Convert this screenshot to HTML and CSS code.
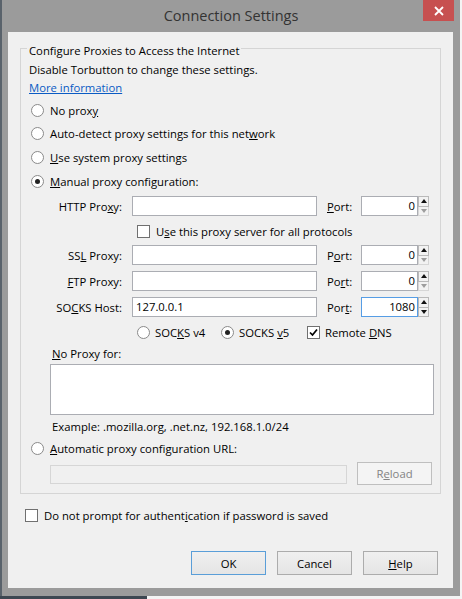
FILE: index.html
```html
<!DOCTYPE html>
<html>
<head>
<meta charset="utf-8">
<title>Connection Settings</title>
<link rel="stylesheet" href="styles.css">
</head>
<body>
<div class="desktop">
  <div class="window">
    <div class="titlebar">
      <div class="title">Connection Settings</div>
      <div class="close">
        <svg width="10" height="10" viewBox="0 0 10 10"><path d="M1 1L9 9M9 1L1 9" stroke="#fff" stroke-width="1.8" fill="none"/></svg>
      </div>
    </div>
    <div class="client">
      <fieldset class="group">
        <legend>Configure Proxies to Access the Internet</legend>
        <div class="line">Disable Torbutton to change these settings.</div>
        <div class="line"><a class="link" href="#">More information</a></div>
        <div class="opt mt2"><span class="radio"></span><span>No prox<u>y</u></span></div>
        <div class="opt mt1"><span class="radio"></span><span>Auto-detect proxy settings for this net<u>w</u>ork</span></div>
        <div class="opt mt2"><span class="radio"></span><span><u>U</u>se system proxy settings</span></div>
        <div class="opt mt2"><span class="radio on"></span><span><u>M</u>anual proxy configuration:</span></div>

        <div class="field mt3">
          <span class="flabel">HTTP Pro<u>x</u>y:</span>
          <span class="tb"></span>
          <span class="plabel"><u>P</u>ort:</span>
          <span class="port">0</span>
          <span class="spin"><span class="up"><i class="tri-up"></i></span><span class="down off"><i class="tri-down"></i></span></span>
        </div>
        <div class="opt sub mt3"><span class="check"></span><span>U<u>s</u>e this proxy server for all protocols</span></div>
        <div class="field mt2">
          <span class="flabel">SS<u>L</u> Proxy:</span>
          <span class="tb"></span>
          <span class="plabel">P<u>o</u>rt:</span>
          <span class="port">0</span>
          <span class="spin"><span class="up"><i class="tri-up"></i></span><span class="down off"><i class="tri-down"></i></span></span>
        </div>
        <div class="field mt4">
          <span class="flabel"><u>F</u>TP Proxy:</span>
          <span class="tb"></span>
          <span class="plabel">Po<u>r</u>t:</span>
          <span class="port">0</span>
          <span class="spin"><span class="up"><i class="tri-up"></i></span><span class="down off"><i class="tri-down"></i></span></span>
        </div>
        <div class="field mt4">
          <span class="flabel">SO<u>C</u>KS Host:</span>
          <span class="tb">127.0.0.1</span>
          <span class="plabel">Por<u>t</u>:</span>
          <span class="port focus">1080</span>
          <span class="spin"><span class="up"><i class="tri-up"></i></span><span class="down"><i class="tri-down"></i></span></span>
        </div>
        <div class="socks mt3">
          <span class="item w84"><span class="radio"></span><span>SOC<u>K</u>S v4</span></span>
          <span class="item w86"><span class="radio on"></span><span>SOCKS <u>v</u>5</span></span>
          <span class="item"><span class="check on"><svg width="11" height="11" viewBox="0 0 11 11"><path d="M2 5.5L4.5 8L9 2.5" stroke="#000" stroke-width="1.7" fill="none"/></svg></span><span>Remote <u>D</u>NS</span></span>
        </div>
        <div class="line indent mt2"><u>N</u>o Proxy for:</div>
        <div class="area"></div>
        <div class="line indent mt3">Example: .mozilla.org, .net.nz, 192.168.1.0/24</div>
        <div class="opt mt1"><span class="radio"></span><span><u>A</u>utomatic proxy configuration URL:</span></div>
        <div class="urlrow">
          <span class="url"></span>
          <span class="btn disabled">R<u>e</u>load</span>
        </div>
      </fieldset>
      <div class="opt prompt"><span class="check"></span><span>Do not prompt for authent<u>i</u>cation if password is saved</span></div>
      <div class="buttons">
        <span class="btn default">OK</span>
        <span class="btn">Cancel</span>
        <span class="btn"><u>H</u>elp</span>
      </div>
    </div>
  </div>
  <div class="strip"></div>
</div>
</body>
</html>
```
FILE: styles.css
```css
body {
  margin: 0;
  background: #f4f4f4;
  font-family: "Open Sans", "Noto Sans", sans-serif;
  font-size: 11.3px;
  color: #000;
}
.desktop {
  width: 462px;
  height: 599px;
  overflow: hidden;
}
.window {
  width: 460px;
  height: 596px;
  box-sizing: border-box;
  background: #9b9b9b;
  border-left: 2px solid #59626b;
  padding: 0 7px 8px 6px;
  display: flex;
  flex-direction: column;
}
.titlebar {
  height: 32px;
  flex: none;
  display: grid;
  grid-template-columns: 1fr auto 1fr;
  align-items: start;
  margin-right: -1px;
}
.title {
  grid-column: 2;
  font-size: 14.5px;
  line-height: 32px;
  color: #333;
}
.close {
  grid-column: 3;
  justify-self: end;
  width: 31px;
  height: 21px;
  background: #c75050;
  display: flex;
  align-items: center;
  justify-content: center;
}
.close svg { display: block; }
.client {
  flex: 1;
  background: #f0f0f0;
  display: flex;
  flex-direction: column;
  padding: 0 12px;
}
.group {
  margin: 6px 0 0;
  padding: 3px 0 8px;
  border: 1px solid #d5d5d5;
  min-width: 0;
}
.group legend {
  margin-left: 6px;
  padding: 6px 2px 0;
  line-height: 14px;
}
.line {
  height: 18px;
  line-height: 18px;
  padding-left: 8px;
  white-space: nowrap;
}
.line.indent { padding-left: 31px; }
.link { color: #0a5bc4; text-decoration: underline; }
.opt {
  display: flex;
  align-items: center;
  gap: 6px;
  height: 22px;
  padding-left: 10px;
  white-space: nowrap;
}
.opt.sub { padding-left: 116px; }
.mt1 { margin-top: 1px; }
.mt2 { margin-top: 2px; }
.mt3 { margin-top: 3px; }
.mt4 { margin-top: 4px; }
.radio {
  width: 13px;
  height: 13px;
  box-sizing: border-box;
  border: 1px solid #8a8a8a;
  border-radius: 50%;
  background: #fff;
  flex: none;
  display: flex;
  align-items: center;
  justify-content: center;
}
.radio.on::after {
  content: "";
  width: 5px;
  height: 5px;
  border-radius: 50%;
  background: #222;
}
.check {
  width: 13px;
  height: 13px;
  box-sizing: border-box;
  border: 1px solid #707070;
  background: #fff;
  flex: none;
  display: flex;
  align-items: center;
  justify-content: center;
}
.check svg { display: block; }
.field {
  display: flex;
  align-items: center;
  height: 22px;
  white-space: nowrap;
}
.flabel {
  width: 101px;
  text-align: right;
}
.tb, .port, .url, .area {
  box-sizing: border-box;
  background: #fff;
  border: 1px solid #abadb3;
}
.tb {
  width: 185px;
  height: 20px;
  margin-left: 10px;
  padding-left: 3px;
  line-height: 18px;
}
.plabel {
  width: 34px;
  margin-left: 10px;
}
.port {
  width: 57px;
  height: 20px;
  text-align: right;
  padding-right: 2px;
  line-height: 18px;
}
.port.focus { border-color: #569de5; }
.spin {
  width: 11px;
  height: 20px;
  display: flex;
  flex-direction: column;
}
.spin > span {
  flex: 1;
  box-sizing: border-box;
  border: 1px solid #b9b9b9;
  background: #f2f2f2;
  display: flex;
  align-items: center;
  justify-content: center;
}
.spin > .down { border-top: 0; }
.spin > .down.off { border-color: #d6d6d6; }
.tri-up, .tri-down {
  width: 0;
  height: 0;
  border-left: 3px solid transparent;
  border-right: 3px solid transparent;
}
.tri-up { border-bottom: 4px solid #111; }
.tri-down { border-top: 4px solid #111; }
.off .tri-down { border-top-color: #9d9d9d; }
.socks {
  display: flex;
  align-items: center;
  height: 22px;
  padding-left: 116px;
  white-space: nowrap;
}
.item {
  display: flex;
  align-items: center;
  gap: 5px;
}
.w84 { width: 84px; }
.w86 { width: 86px; }
.area {
  margin: 1px 0 0 29px;
  width: 384px;
  height: 51px;
}
.urlrow {
  display: flex;
  align-items: flex-end;
  height: 23px;
  margin-top: 3px;
  padding-left: 29px;
}
.url {
  width: 297px;
  height: 19px;
  margin: 0 10px 1px 0;
  background: #f0f0f0;
  border-color: #d6d6d6;
}
.btn {
  box-sizing: border-box;
  width: 75px;
  height: 24px;
  border: 1px solid #acacac;
  background: linear-gradient(#f0f0f0, #e5e5e5);
  display: flex;
  align-items: center;
  justify-content: center;
}
.urlrow .btn { height: 23px; }
.btn.disabled {
  color: #838383;
  border-color: #bfbfbf;
  background: #f4f4f4;
}
.btn.default { border-color: #5a9ed8; }
.prompt {
  margin-top: 10px;
  padding-left: 5px;
}
.buttons {
  display: flex;
  justify-content: flex-end;
  gap: 11px;
  margin-top: 25px;
  margin-right: 3px;
}
.strip {
  width: 147px;
  height: 3px;
  background: #3d4751;
}
```
